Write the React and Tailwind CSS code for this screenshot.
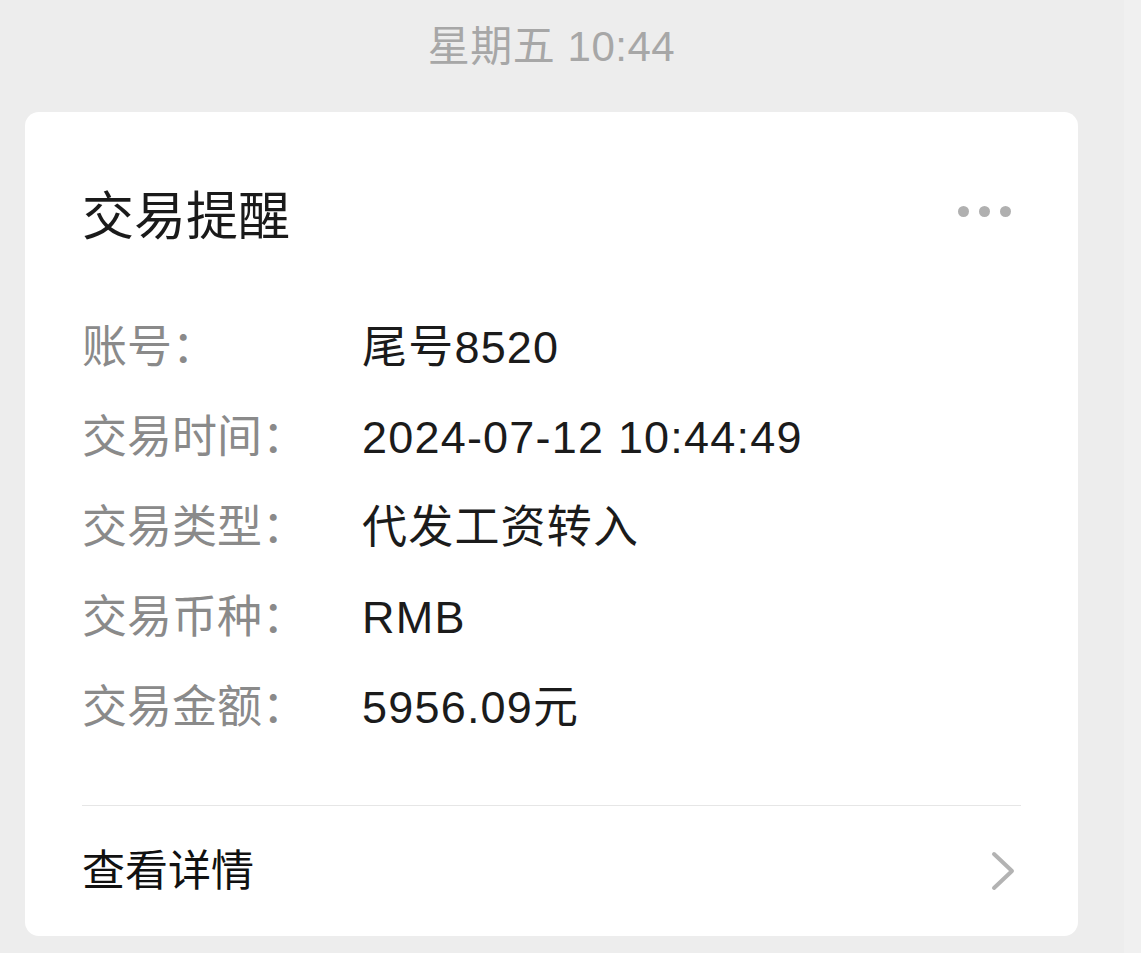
const rows = [
  { label: "账号：", value: "尾号8520" },
  { label: "交易时间：", value: "2024-07-12 10:44:49" },
  { label: "交易类型：", value: "代发工资转入" },
  { label: "交易币种：", value: "RMB" },
  { label: "交易金额：", value: "5956.09元" },
];

const font = "font-['Liberation_Sans','Noto_Sans_CJK_SC',sans-serif]";

export default function App() {
  return (
    <div className={`min-h-[953px] w-full bg-[#ededed] flex ${font}`}>
      <div className="flex-1 flex flex-col pl-[25px] pr-[46px]">
        <div className="h-[94px] flex items-center justify-center text-[42px] leading-none text-[#a7a7a7] tracking-[0.5px]">
          星期五 10:44
        </div>

        <div className="mt-[18px] rounded-[14px] bg-white px-[57px]">
          <div className="pt-[75px] h-[135px] flex items-start justify-between">
            <h1 className="text-[52px] leading-[60px] text-[#1a1a1a]">交易提醒</h1>
            <div className="h-[60px] flex items-center gap-[10px] pr-[10px] -mt-[6px]">
              <span className="w-[11px] h-[11px] rounded-full bg-[#b0b0b0]" />
              <span className="w-[11px] h-[11px] rounded-full bg-[#b0b0b0]" />
              <span className="w-[11px] h-[11px] rounded-full bg-[#b0b0b0]" />
            </div>
          </div>

          <div className="mt-[55px] flex flex-col">
            {rows.map((r) => (
              <div key={r.label} className="h-[90px] flex items-center text-[45px] leading-none">
                <span className="w-[280px] shrink-0 text-[#8a8a8a]">{r.label}</span>
                <span className="text-[#1b1b1b] tracking-[1.2px]">{r.value}</span>
              </div>
            ))}
          </div>

          <div className="mt-[53px] h-px bg-[#e6e6e6]" />

          <div className="h-[130px] flex items-center justify-between">
            <span className="text-[43px] leading-none text-[#111111]">查看详情</span>
            <svg width="26" height="42" viewBox="0 0 26 42" className="mr-[5px]">
              <polyline
                points="4,4 22,21 4,38"
                fill="none"
                stroke="#b3b3b3"
                strokeWidth="4"
                strokeLinecap="round"
                strokeLinejoin="round"
              />
            </svg>
          </div>
        </div>
      </div>
      <div className="w-[17px] bg-[#f0f0f0]" />
    </div>
  );
}
